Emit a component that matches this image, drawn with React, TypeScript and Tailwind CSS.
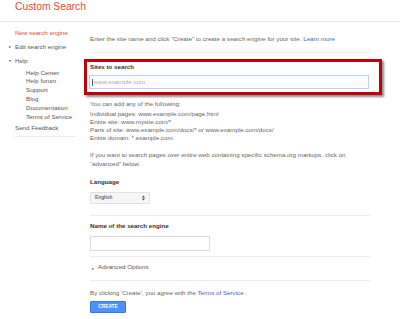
const Divider = () => <div className="border-t border-[#ebebeb]" />;

const SideLink = ({ children }: { children: React.ReactNode }) => (
    <div className="leading-[8.8px] text-[#555]">{children}</div>
);

const App = () => {
    return (
        <div className="w-[400px] h-[319px] overflow-hidden bg-white font-['Liberation_Sans',Arial,sans-serif] text-[6.2px] text-[#666]">
            <div className="h-[22px] border-b border-[#e5e5e5] pl-[15px]">
                <h1 className="pt-[1px] text-[10.3px] leading-[12px] text-[#dd4b39]">Custom Search</h1>
            </div>

            <div className="flex">
                <div className="w-[90px] shrink-0 pt-[7px]">
                    <div className="pl-[15px] leading-[8px] text-[#dd4b39]">New search engine</div>
                    <div className="mt-[6px] flex items-center leading-[8px] text-[#555]">
                        <span className="w-[15px] pl-[9px] text-[4px]">▸</span>
                        Edit search engine
                    </div>
                    <div className="mt-[6px] flex items-center leading-[8px] text-[#555]">
                        <span className="w-[15px] pl-[9px] text-[4px]">▾</span>
                        Help
                    </div>
                    <div className="mt-[3.6px] pl-[26px]">
                        <SideLink>Help Center</SideLink>
                        <SideLink>Help forum</SideLink>
                        <SideLink>Support</SideLink>
                        <SideLink>Blog</SideLink>
                        <SideLink>Documentation</SideLink>
                        <SideLink>Terms of Service</SideLink>
                    </div>
                    <div className="mt-[2.6px] pl-[15px] leading-[8px] text-[#555]">Send Feedback</div>
                    <div className="ml-[15px] mt-[4px] w-[60px] border-t border-[#ebebeb]" />
                </div>

                <div className="w-[280px] pt-[13px]">
                    <p className="leading-[8px]">
                        Enter the site name and click "Create" to create a search engine for your site.{' '}
                        <span className="text-[#4263c8]">Learn more</span>
                    </p>
                    <div className="mt-[9px]">
                        <Divider />
                    </div>

                    <div className="ml-[-6px] mr-[-12px] mt-[6px] border-[3px] border-[#c0000a] pb-[3px] pl-[2px] pr-[10px] pt-[1px] shadow-[2px_2px_2px_rgba(0,0,0,0.45)]">
                        <div className="pl-[1px] font-bold leading-[8px] text-[#333]">Sites to search</div>
                        <div className="mt-[4px] flex h-[14px] items-center border border-[#bcd0f5] pl-[2px] text-[#aaa]">
                            <span className="mr-[0.5px] h-[7px] w-px bg-[#555]" />
                            www.example.com
                        </div>
                    </div>

                    <p className="mt-[5px] leading-[8px]">You can add any of the following:</p>
                    <div className="mt-[2px] leading-[8px]">
                        <div>Individual pages: www.example.com/page.html</div>
                        <div>Entire site: www.mysite.com/*</div>
                        <div>Parts of site: www.example.com/docs/* or www.example.com/docs/</div>
                        <div>Entire domain: *.example.com</div>
                    </div>
                    <p className="mt-[9px] leading-[8.5px]">
                        If you want to search pages over entire web containing specific schema.org markups, click on
                        <br />
                        “advanced” below.
                    </p>

                    <div className="mt-[9.5px] font-bold leading-[8px] text-[#333]">Language</div>
                    <div className="mt-[6px] flex h-[12px] w-[60px] items-center justify-between rounded-[1px] border border-[#e0e0e0] bg-[#f6f6f6] px-[4px] text-[4.8px] font-bold text-[#666]">
                        English
                        <svg width="3" height="6" viewBox="0 0 3 6">
                            <path d="M0 2.4 L1.5 0.6 L3 2.4 Z M0 3.6 L1.5 5.4 L3 3.6 Z" fill="#444" />
                        </svg>
                    </div>

                    <div className="mt-[11px]">
                        <Divider />
                    </div>
                    <div className="mt-[6px] font-bold leading-[8px] text-[#333]">Name of the search engine</div>
                    <div className="mt-[6px] h-[15px] w-[120px] border border-[#dcdcdc]" />
                    <div className="mt-[5px]">
                        <Divider />
                    </div>
                    <div className="mt-[5px] flex items-center leading-[8px] text-[#555]">
                        <span className="mt-[3px] w-[8px] pl-[2px] text-[3.5px]">▸</span>
                        Advanced Options
                    </div>
                    <div className="mt-[7px]">
                        <Divider />
                    </div>
                    <p className="mt-[8px] leading-[8px]">
                        By clicking 'Create', you agree with the <span className="text-[#4263c8]">Terms of Service</span>{' '}
                        <span className="text-[#4263c8]">.</span>
                    </p>
                    <button className="mt-[4px] flex h-[12px] w-[36px] items-center justify-center rounded-[1px] border border-[#3079ed] bg-[#4d90fe] text-[4.8px] font-bold text-white">
                        CREATE
                    </button>
                </div>
            </div>
        </div>
    );
};

export default App;
